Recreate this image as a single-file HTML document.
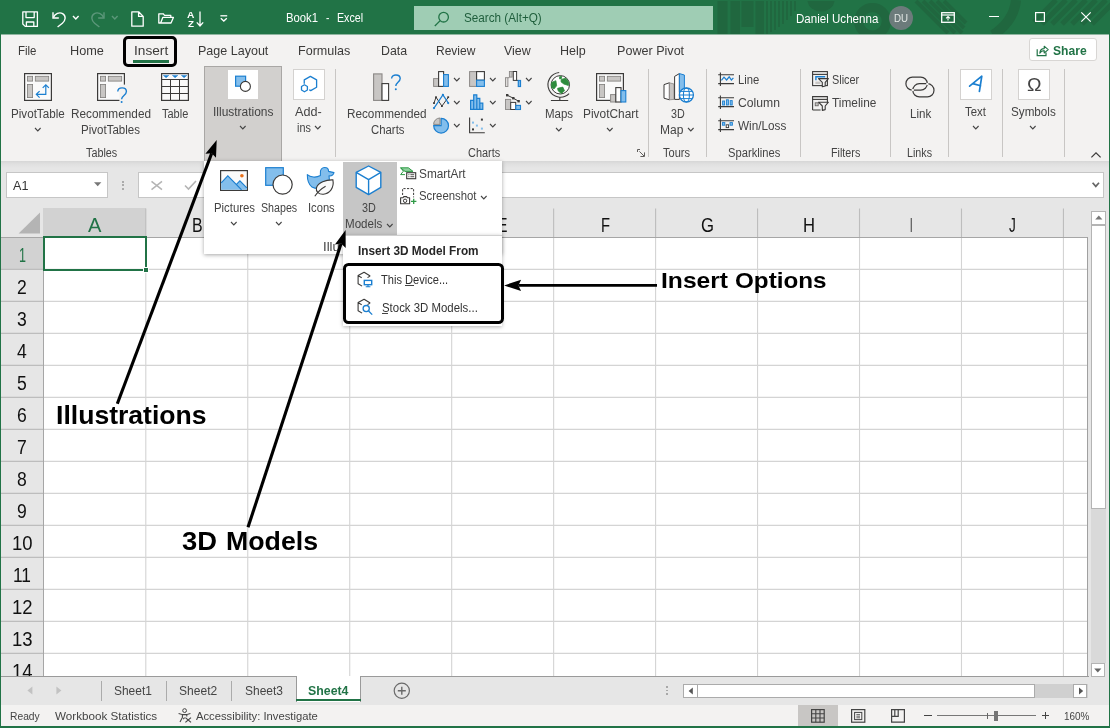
<!DOCTYPE html>
<html><head><meta charset="utf-8"><title>Excel</title>
<style>
html,body{margin:0;padding:0;}
body{width:1110px;height:728px;overflow:hidden;position:relative;background:#fff;font-family:"Liberation Sans",sans-serif;}
#w{position:absolute;left:0;top:0;width:1110px;height:728px;overflow:hidden;will-change:transform;}
#w div,#w span,#w svg{position:absolute;}
#w span{white-space:nowrap;transform-origin:0 0;}
#w svg{overflow:visible;}
</style></head><body><div id="w">
<div style="left:0px;top:0px;width:1110px;height:728px;background:#217346;"></div>
<div style="left:1px;top:34px;width:1107.5px;height:127px;background:#f3f2f1;"></div>
<div style="left:1px;top:161px;width:1107.5px;height:47px;background:#e6e6e6;background:linear-gradient(#d6d6d6 0,#e0e0e0 3px,#e6e6e6 7px);"></div>
<div style="left:1px;top:34px;width:1107.5px;height:1px;background:#8fb5a0;"></div>
<svg style="left:714px;top:0px;overflow:hidden;" width="396" height="34" viewBox="0 0 396 34">
<g fill="#20673f">
<rect x="3.5" y="1" width="10" height="33"/><rect x="16.5" y="1" width="9.5" height="33"/><rect x="27.5" y="1" width="12" height="26"/><rect x="41.5" y="1" width="8.5" height="33"/>
<rect x="52" y="1" width="2" height="33"/><rect x="56" y="1" width="2" height="31"/><rect x="60" y="1" width="2" height="29"/><rect x="64" y="1" width="2" height="26"/><rect x="68" y="1" width="2" height="23"/><rect x="72" y="1" width="2" height="19"/><rect x="76" y="1" width="2" height="15"/><rect x="80" y="1" width="2" height="10"/>
<path d="M93.5 1 A13.6 12 0 0 0 120.5 1 Z"/>
</g>
<g fill="none" stroke="#20673f">
<circle cx="158.5" cy="21.3" r="13.8" stroke-width="9.2"/>
<path d="M202 1 L234 33 M209 1 L241 33 M216 1 L248 33 M223 1 L250 28 M230 1 L252 23" stroke-width="4"/>
<path d="M302 0 Q300 21 279 35" stroke-width="10"/>
<path d="M320 22 L342 0 M328 24 L352 0 M338 24 L362 0 M348 24 L372 0 M358 24 L382 0 M368 24 L392 0 M378 24 L400 2" stroke-width="5"/>
</g></svg>
<svg style="left:22px;top:11px;" width="16" height="16" viewBox="0 0 16 16"><path d="M0.8 0.8 H15.4 V15.4 H3.2 L0.8 13 Z M4 0.8 V6.6 H12.2 V0.8 M4.4 15.4 V11 H11.8 V15.4" fill="none" stroke="#fff" stroke-width="1.3" stroke-linejoin="round"/></svg>
<svg style="left:51px;top:10px;" width="16" height="18" viewBox="0 0 16 18"><path d="M2 2.2 V8 H7.8" fill="none" stroke="#fff" stroke-width="1.4"/><path d="M2.4 7.6 C4 3.6 8.4 1.8 11.6 3.6 C15.4 6 14.6 10.6 11.4 13.2 L6.6 17" fill="none" stroke="#fff" stroke-width="1.4"/></svg>
<svg style="left:71.9px;top:14.5px;" width="7.6" height="5" viewBox="0 0 7.6 5"><path d="M1 1 L3.8 4 L6.6 1" fill="none" stroke="#fff" stroke-width="1.4"/></svg>
<svg style="left:90px;top:10px;" width="16" height="18" viewBox="0 0 16 18"><path d="M14 2.2 V8 H8.2" fill="none" stroke="#5c977a" stroke-width="1.4"/><path d="M13.6 7.6 C12 3.6 7.6 1.8 4.4 3.6 C0.6 6 1.4 10.6 4.6 13.2 L9.4 17" fill="none" stroke="#5c977a" stroke-width="1.4"/></svg>
<svg style="left:110.5px;top:14.5px;" width="7.6" height="5" viewBox="0 0 7.6 5"><path d="M1 1 L3.8 4 L6.6 1" fill="none" stroke="#5c977a" stroke-width="1.4"/></svg>
<svg style="left:130.5px;top:11px;" width="13" height="16" viewBox="0 0 13 16"><path d="M0.8 0.8 H7.6 L12.2 5.4 V15.2 H0.8 Z M7.6 0.8 V5.4 H12.2" fill="none" stroke="#fff" stroke-width="1.3" stroke-linejoin="round"/></svg>
<svg style="left:157.5px;top:13px;" width="16" height="11" viewBox="0 0 16 11"><path d="M2.6 10 H0.8 V0.8 H5.2 L6.6 2.4 H12.8 V4.4 M2.6 10 L4.8 4.4 H15.4 L13 10 Z" fill="none" stroke="#fff" stroke-width="1.3" stroke-linejoin="round"/></svg>
<span style="left:187.20px;top:9px;font-size:9.2px;line-height:12px;color:#fff;font-weight:bold;transform:scaleX(1.1170);">A</span>
<span style="left:187.80px;top:18px;font-size:9.2px;line-height:12px;color:#fff;font-weight:bold;transform:scaleX(1.0667);">Z</span>
<svg style="left:196px;top:11px;" width="8" height="16" viewBox="0 0 8 16"><path d="M4 0.5 V15 M0.8 11.4 L4 15 L7.2 11.4" fill="none" stroke="#fff" stroke-width="1.3"/></svg>
<svg style="left:220px;top:14.5px;" width="8" height="7" viewBox="0 0 8 7"><path d="M0.4 0.8 H7.2" stroke="#fff" stroke-width="1.3"/><path d="M0.8 3.2 L3.8 6 L6.8 3.2" fill="none" stroke="#fff" stroke-width="1.3"/></svg>
<span style="left:286.30px;top:10px;font-size:12px;line-height:16px;color:#fff;transform:scaleX(0.9412);">Book1</span>
<span style="left:325.80px;top:10px;font-size:12px;line-height:16px;color:#fff;transform:scaleX(0.8500);">-</span>
<span style="left:336.70px;top:10px;font-size:12px;line-height:16px;color:#fff;transform:scaleX(0.8885);">Excel</span>
<div style="left:414px;top:6px;width:299.3px;height:24px;background:#9fcdb4;"></div>
<svg style="left:433.5px;top:10.5px;" width="16" height="16" viewBox="0 0 16 16"><circle cx="9.6" cy="6.2" r="4.8" fill="none" stroke="#217346" stroke-width="1.3"/><path d="M6.2 9.6 L0.8 15" stroke="#217346" stroke-width="1.3"/></svg>
<span style="left:464.00px;top:10px;font-size:12px;line-height:16px;color:#1f5e3c;transform:scaleX(0.9751);">Search (Alt+Q)</span>
<span style="left:795.50px;top:11px;font-size:12px;line-height:16px;color:#fff;transform:scaleX(0.9640);">Daniel Uchenna</span>
<svg style="left:888px;top:5px;" width="26" height="26" viewBox="0 0 26 26"><circle cx="13" cy="13" r="12" fill="#6c7b7b"/></svg>
<span style="left:894.00px;top:12px;font-size:10.2px;line-height:13px;color:#e4e8e6;transform:scaleX(0.9532);">DU</span>
<svg style="left:940.5px;top:11.5px;" width="14" height="11" viewBox="0 0 14 11"><rect x="0.7" y="0.7" width="12.6" height="9.6" fill="none" stroke="#fff" stroke-width="1.3"/><path d="M0.7 3 H13.3" stroke="#fff" stroke-width="1.2"/><path d="M7 8.6 V4.6 M5 6.4 L7 4.6 L9 6.4" fill="none" stroke="#fff" stroke-width="1.1"/></svg>
<div style="left:989px;top:16px;width:10px;height:1.2px;background:#fff;"></div>
<svg style="left:1035px;top:12px;" width="10" height="10" viewBox="0 0 10 10"><rect x="0.6" y="0.6" width="8.8" height="8.8" fill="none" stroke="#fff" stroke-width="1.2"/></svg>
<svg style="left:1081px;top:12px;" width="10" height="10" viewBox="0 0 10 10"><path d="M0.3 0.3 L9.7 9.7 M9.7 0.3 L0.3 9.7" stroke="#fff" stroke-width="1.2"/></svg>
<span style="left:18.00px;top:43px;font-size:12.6px;line-height:16px;color:#3b3a39;transform:scaleX(0.9108);">File</span>
<span style="left:70.00px;top:43px;font-size:12.6px;line-height:16px;color:#3b3a39;transform:scaleX(1.0093);">Home</span>
<span style="left:133.60px;top:43px;font-size:12.6px;line-height:16px;color:#3b3a39;transform:scaleX(1.0867);">Insert</span>
<span style="left:197.50px;top:43px;font-size:12.6px;line-height:16px;color:#3b3a39;transform:scaleX(0.9947);">Page Layout</span>
<span style="left:298.30px;top:43px;font-size:12.6px;line-height:16px;color:#3b3a39;transform:scaleX(0.9976);">Formulas</span>
<span style="left:380.50px;top:43px;font-size:12.6px;line-height:16px;color:#3b3a39;transform:scaleX(0.9817);">Data</span>
<span style="left:436.30px;top:43px;font-size:12.6px;line-height:16px;color:#3b3a39;transform:scaleX(0.9532);">Review</span>
<span style="left:504.00px;top:43px;font-size:12.6px;line-height:16px;color:#3b3a39;transform:scaleX(0.9857);">View</span>
<span style="left:559.70px;top:43px;font-size:12.6px;line-height:16px;color:#3b3a39;transform:scaleX(0.9947);">Help</span>
<span style="left:616.70px;top:43px;font-size:12.6px;line-height:16px;color:#3b3a39;transform:scaleX(0.9989);">Power Pivot</span>
<div style="left:133px;top:60px;width:36px;height:3px;background:#217346;"></div>
<div style="left:123px;top:36px;width:54px;height:31px;background:transparent;box-sizing:border-box;border:3px solid #000;border-radius:5px;"></div>
<div style="left:1029px;top:38px;width:68px;height:23.4px;background:#fff;box-sizing:border-box;border:1px solid #d8d6d4;border-radius:3px;"></div>
<span style="left:1053.00px;top:43px;font-size:12.6px;line-height:16px;color:#217346;font-weight:bold;transform:scaleX(0.9611);">Share</span>
<svg style="left:1036px;top:44px;" width="13" height="13" viewBox="0 0 13 13"><path d="M1.2 5.2 V11.6 H10 V8.6" fill="none" stroke="#217346" stroke-width="1.2"/><path d="M3.8 9.2 C4 6 6 4.6 8.2 4.6 V2.2 L12.2 5.6 L8.2 9 V6.6 C6.4 6.6 4.8 7.4 3.8 9.2 Z" fill="none" stroke="#217346" stroke-width="1.1" stroke-linejoin="round"/></svg>
<svg style="left:24px;top:73px;" width="28" height="28" viewBox="0 0 28 28"><rect x="0.6" y="0.6" width="26.8" height="26.8" fill="#fafafa" stroke="#3b3a39" stroke-width="1.2"/><rect x="3.4" y="3.3" width="5.2" height="4.8" fill="#c8c6c4" stroke="#7f7d7b" stroke-width="0.8"/><rect x="11.3" y="3.3" width="13.4" height="4.8" fill="#c8c6c4" stroke="#7f7d7b" stroke-width="0.8"/><rect x="3.4" y="11.4" width="5.2" height="13.2" fill="#c8c6c4" stroke="#7f7d7b" stroke-width="0.8"/><path d="M12.3 21.3 H21.8 V11.8 M15.6 18.1 L12.3 21.3 L15.6 24.6 M18.7 14.9 L21.8 11.8 L24.9 14.9" fill="none" stroke="#1b7fd0" stroke-width="1.2"/></svg>
<span style="left:11.30px;top:106px;font-size:12px;line-height:16px;color:#444;transform:scaleX(0.9698);">PivotTable</span>
<svg style="left:33.7px;top:126.85px;" width="7.6" height="4.9" viewBox="0 0 7.6 4.9"><path d="M1 1 L3.8 3.9 L6.6 1" fill="none" stroke="#444" stroke-width="1.1"/></svg>
<svg style="left:97px;top:73px;" width="32" height="31" viewBox="0 0 32 31"><rect x="0.6" y="0.6" width="26.8" height="26.8" fill="#fafafa" stroke="#3b3a39" stroke-width="1.2"/><rect x="3.4" y="3.3" width="5.2" height="4.8" fill="#c8c6c4" stroke="#7f7d7b" stroke-width="0.8"/><rect x="11.3" y="3.3" width="13.4" height="4.8" fill="#c8c6c4" stroke="#7f7d7b" stroke-width="0.8"/><rect x="3.4" y="11.4" width="5.2" height="13.2" fill="#c8c6c4" stroke="#7f7d7b" stroke-width="0.8"/><rect x="22.4" y="11.6" width="10" height="20" fill="#f3f2f1"/><path d="M20.8 18.6 C20.8 13.6 29.4 13.6 29.4 18.6 C29.4 22.4 24.6 22.6 24.6 26.2" fill="none" stroke="#1b7fd0" stroke-width="1.4"/><circle cx="24.6" cy="29" r="1" fill="#1b7fd0"/></svg>
<span style="left:71.00px;top:106px;font-size:12px;line-height:16px;color:#444;transform:scaleX(0.9831);">Recommended</span>
<span style="left:81.00px;top:122px;font-size:12px;line-height:16px;color:#444;transform:scaleX(0.9613);">PivotTables</span>
<svg style="left:161px;top:73px;" width="28" height="28" viewBox="0 0 28 28"><rect x="0.6" y="0.6" width="26.8" height="26.8" fill="#fafafa" stroke="#3b3a39" stroke-width="1.2"/><path d="M0.6 6.5 H27.4 M0.6 13.5 H27.4 M0.6 20.5 H27.4 M9.5 6.5 V27.4 M18.5 6.5 V27.4" stroke="#3b3a39" stroke-width="1"/><path d="M2.4 2.4 H7.8 L5.1 4.7 Z M11.4 2.4 H16.8 L14.1 4.7 Z M20.4 2.4 H25.8 L23.1 4.7 Z" fill="#1b7fd0" stroke="#1b7fd0" stroke-width="0.5"/></svg>
<span style="left:161.70px;top:106px;font-size:12px;line-height:16px;color:#444;transform:scaleX(0.9168);">Table</span>
<span style="left:86.30px;top:145px;font-size:12px;line-height:16px;color:#444;transform:scaleX(0.8995);">Tables</span>
<div style="left:204px;top:66.3px;width:78px;height:95px;background:#d2d0ce;box-sizing:border-box;border:1px solid #a9a7a5;border-bottom:none;"></div>
<div style="left:227.5px;top:69.7px;width:30.5px;height:29.5px;background:#fff;"></div>
<svg style="left:234px;top:75px;" width="18" height="18" viewBox="0 0 18 18"><rect x="1.6" y="1.2" width="10" height="10" fill="#83beec" stroke="#1b7fd0" stroke-width="1.2"/><circle cx="11.4" cy="11.4" r="5" fill="#fff" stroke="#3b3a39" stroke-width="1.1"/></svg>
<span style="left:212.50px;top:104px;font-size:12px;line-height:16px;color:#444;transform:scaleX(0.9969);">Illustrations</span>
<svg style="left:238.5px;top:125.05px;" width="7.6" height="4.9" viewBox="0 0 7.6 4.9"><path d="M1 1 L3.8 3.9 L6.6 1" fill="none" stroke="#444" stroke-width="1.1"/></svg>
<div style="left:293px;top:69px;width:31.7px;height:30.7px;background:#fff;box-sizing:border-box;border:1px solid #d4d2d0;"></div>
<svg style="left:299px;top:74px;" width="20" height="20" viewBox="0 0 20 20"><path d="M5.25 9.8 V5.86 L11.4 2.4 L17.6 5.86 V13.3 L11.7 16.6 L10.2 15.8" fill="none" stroke="#1b7fd0" stroke-width="1.3" stroke-linejoin="round"/><path d="M5.45 10.8 L8.4 12.5 V16 L5.45 17.75 L2.5 16 V12.5 Z" fill="none" stroke="#1b7fd0" stroke-width="1.3" stroke-linejoin="round"/></svg>
<span style="left:295.00px;top:104px;font-size:12px;line-height:16px;color:#444;transform:scaleX(1.0522);">Add-</span>
<span style="left:296.70px;top:120px;font-size:12px;line-height:16px;color:#444;transform:scaleX(0.9012);">ins</span>
<svg style="left:313.9px;top:125.05px;" width="7.6" height="4.9" viewBox="0 0 7.6 4.9"><path d="M1 1 L3.8 3.9 L6.6 1" fill="none" stroke="#444" stroke-width="1.1"/></svg>
<div style="left:335px;top:69px;width:1px;height:88px;background:#c8c6c4;"></div>
<svg style="left:373px;top:73px;" width="30" height="29" viewBox="0 0 30 29"><rect x="0.6" y="0.9" width="8.4" height="26.5" fill="#c8c6c4" stroke="#8a8886" stroke-width="1.1"/><rect x="9" y="10.6" width="6.6" height="16.8" fill="#fff" stroke="#3b3a39" stroke-width="1.1"/><path d="M18.6 5.6 C18.6 0.8 27.2 0.8 27.2 5.6 C27.2 9.2 22.8 9.4 22.8 13" fill="none" stroke="#1b7fd0" stroke-width="1.4"/><circle cx="22.8" cy="16.2" r="1" fill="#1b7fd0"/></svg>
<span style="left:346.70px;top:106px;font-size:12px;line-height:16px;color:#444;transform:scaleX(0.9782);">Recommended</span>
<span style="left:370.50px;top:122px;font-size:12px;line-height:16px;color:#444;transform:scaleX(0.9470);">Charts</span>
<svg style="left:433px;top:71px;" width="16" height="16" viewBox="0 0 16 16"><rect x="0.6" y="7.6" width="5" height="7.8" fill="#c8c6c4" stroke="#8a8886" stroke-width="1"/><rect x="5.6" y="0.6" width="5" height="14.8" fill="#fff" stroke="#3b3a39" stroke-width="1.1"/><rect x="10.6" y="3.6" width="4.8" height="11.8" fill="#83beec" stroke="#1b7fd0" stroke-width="1.1"/></svg>
<svg style="left:452.7px;top:76.85px;" width="7.6" height="4.9" viewBox="0 0 7.6 4.9"><path d="M1 1 L3.8 3.9 L6.6 1" fill="none" stroke="#444" stroke-width="1.1"/></svg>
<svg style="left:469px;top:71px;" width="16" height="16" viewBox="0 0 16 16"><rect x="0.6" y="0.6" width="7" height="14.8" fill="#c8c6c4" stroke="#8a8886" stroke-width="1"/><rect x="7.6" y="0.6" width="7.8" height="8.6" fill="#fff" stroke="#3b3a39" stroke-width="1.1"/><rect x="7.6" y="9.2" width="7.8" height="6.2" fill="#83beec" stroke="#1b7fd0" stroke-width="1.1"/></svg>
<svg style="left:488.6px;top:76.85px;" width="7.6" height="4.9" viewBox="0 0 7.6 4.9"><path d="M1 1 L3.8 3.9 L6.6 1" fill="none" stroke="#444" stroke-width="1.1"/></svg>
<svg style="left:505px;top:71px;" width="16" height="16" viewBox="0 0 16 16"><rect x="0.5" y="6.7" width="2.4" height="8.8" fill="#e1dfdd" stroke="#8a8886" stroke-width="0.9"/><rect x="4.4" y="0.5" width="2.7" height="5.6" fill="#c8c6c4" stroke="#8a8886" stroke-width="0.9"/><path d="M2.9 6.7 H4.4 M7.1 0.5 H8.3" stroke="#8a8886" stroke-width="0.9"/><rect x="8.3" y="0.5" width="3.3" height="8.9" fill="#fff" stroke="#3b3a39" stroke-width="1"/><path d="M11.6 9.4 H13.2" stroke="#3b3a39" stroke-width="1"/><rect x="13.3" y="9.5" width="2.2" height="6" fill="#83beec" stroke="#1b7fd0" stroke-width="1.2"/></svg>
<svg style="left:524.7px;top:76.85px;" width="7.6" height="4.9" viewBox="0 0 7.6 4.9"><path d="M1 1 L3.8 3.9 L6.6 1" fill="none" stroke="#444" stroke-width="1.1"/></svg>
<svg style="left:433px;top:94px;" width="16" height="16" viewBox="0 0 16 16"><path d="M1 9.1 L3 3.2 L8.9 12.1 L15.4 3.2" fill="none" stroke="#3b3a39" stroke-width="1"/><path d="M1 14.1 L9.9 0.8 L15.4 9.1" fill="none" stroke="#1b7fd0" stroke-width="1.2"/><g fill="#3b3a39"><rect x="0.1" y="8.2" width="1.8" height="1.8"/><rect x="2.1" y="2.3" width="1.8" height="1.8"/><rect x="8" y="11.2" width="1.8" height="1.8"/><rect x="14.3" y="2.3" width="1.8" height="1.8"/></g><g fill="#1b7fd0"><circle cx="1" cy="14.1" r="1.1"/><circle cx="9.9" cy="0.9" r="1.1"/><circle cx="15.2" cy="9.1" r="1.1"/></g></svg>
<svg style="left:452.7px;top:99.85px;" width="7.6" height="4.9" viewBox="0 0 7.6 4.9"><path d="M1 1 L3.8 3.9 L6.6 1" fill="none" stroke="#444" stroke-width="1.1"/></svg>
<svg style="left:469px;top:94px;" width="16" height="16" viewBox="0 0 16 16"><path d="M1.6 15.4 V6.4 H4.7 V0.8 H7.8 V4.4 H10.8 V9.2 H13.8 V15.4 Z M4.7 6.4 V15.4 M7.8 4.4 V15.4 M10.8 9.2 V15.4" fill="#83beec" stroke="#1b7fd0" stroke-width="1.2"/></svg>
<svg style="left:488.6px;top:99.85px;" width="7.6" height="4.9" viewBox="0 0 7.6 4.9"><path d="M1 1 L3.8 3.9 L6.6 1" fill="none" stroke="#444" stroke-width="1.1"/></svg>
<svg style="left:505px;top:94px;" width="16" height="16" viewBox="0 0 16 16"><rect x="0.5" y="5.4" width="5.2" height="10.1" fill="#c8c6c4" stroke="#8a8886" stroke-width="0.9"/><rect x="5.7" y="8.4" width="5" height="7.1" fill="#fff" stroke="#3b3a39" stroke-width="1"/><rect x="10.8" y="11.4" width="4.7" height="4.1" fill="#83beec" stroke="#1b7fd0" stroke-width="1.1"/><path d="M2.2 1.2 L8.3 4.2 L13.6 7.2" fill="none" stroke="#3b3a39" stroke-width="1"/><rect x="1" y="0" width="2.4" height="2.4" fill="#3b3a39"/><rect x="7.1" y="3" width="2.4" height="2.4" fill="#3b3a39"/><rect x="12.4" y="6" width="2.4" height="2.4" fill="#3b3a39"/></svg>
<svg style="left:524.7px;top:99.85px;" width="7.6" height="4.9" viewBox="0 0 7.6 4.9"><path d="M1 1 L3.8 3.9 L6.6 1" fill="none" stroke="#444" stroke-width="1.1"/></svg>
<svg style="left:433px;top:116.5px;" width="17" height="17" viewBox="0 0 17 17"><path d="M8.1 8.7 V1.3 A7.4 7.4 0 1 1 0.7 8.7 Z" fill="#83beec" stroke="#1b7fd0" stroke-width="1.2"/><path d="M7 7.4 H0.6 A6.4 6.4 0 0 1 7 1 Z" fill="#c8c6c4" stroke="#8a8886" stroke-width="1"/></svg>
<svg style="left:452.7px;top:122.85px;" width="7.6" height="4.9" viewBox="0 0 7.6 4.9"><path d="M1 1 L3.8 3.9 L6.6 1" fill="none" stroke="#444" stroke-width="1.1"/></svg>
<svg style="left:469px;top:116.5px;" width="16" height="17" viewBox="0 0 16 17"><path d="M0.6 0.4 V15.7 H15.8" fill="none" stroke="#3b3a39" stroke-width="1.1"/><rect x="11.9" y="1.6" width="2" height="2" fill="#3b3a39"/><rect x="3" y="11.4" width="2" height="2" fill="#3b3a39"/><rect x="3" y="4.6" width="2" height="2" fill="#83beec"/><rect x="6.9" y="7.6" width="2" height="2" fill="#83beec"/><rect x="11.9" y="10.6" width="2" height="2" fill="#83beec"/></svg>
<svg style="left:488.6px;top:122.85px;" width="7.6" height="4.9" viewBox="0 0 7.6 4.9"><path d="M1 1 L3.8 3.9 L6.6 1" fill="none" stroke="#444" stroke-width="1.1"/></svg>
<svg style="left:546px;top:71px;" width="26" height="31" viewBox="0 0 26 31"><circle cx="14.3" cy="13.8" r="9.2" fill="#fff" stroke="#3b3a39" stroke-width="1"/><path d="M5.6 11.4 L9.9 9.7 L10.6 14.8 L7.9 18 L5.4 16.3 Z M15.1 8.4 L19.8 7.2 L22.9 11.4 L22.4 14.5 L17.8 13 L15.1 10.9 Z M11.6 17.3 L16.8 16.1 L18.5 19.8 L15.3 22.6 L12.1 19.8 Z M13.6 5.7 L15.5 5.2 L15.5 7.4 L13.6 7.9 Z" fill="#2e8b3d" stroke="#2e8b3d" stroke-width="0.8" stroke-linejoin="round"/><path d="M13.2 1.45 A12.4 12.4 0 1 0 23.1 22.6" fill="none" stroke="#3b3a39" stroke-width="1.1"/><path d="M13.8 26.2 V29.4 M4.9 29.5 H22.2" stroke="#3b3a39" stroke-width="1.1"/></svg>
<span style="left:544.70px;top:106px;font-size:12px;line-height:16px;color:#444;transform:scaleX(0.9566);">Maps</span>
<svg style="left:555px;top:126.85px;" width="7.6" height="4.9" viewBox="0 0 7.6 4.9"><path d="M1 1 L3.8 3.9 L6.6 1" fill="none" stroke="#444" stroke-width="1.1"/></svg>
<svg style="left:596px;top:73px;" width="31" height="30" viewBox="0 0 31 30"><rect x="0.6" y="0.6" width="26.8" height="26.8" fill="#fafafa" stroke="#3b3a39" stroke-width="1.2"/><rect x="3.4" y="3.3" width="5.2" height="4.8" fill="#c8c6c4" stroke="#7f7d7b" stroke-width="0.8"/><rect x="11.3" y="3.3" width="13.4" height="4.8" fill="#c8c6c4" stroke="#7f7d7b" stroke-width="0.8"/><rect x="3.4" y="11.4" width="5.2" height="13.2" fill="#c8c6c4" stroke="#7f7d7b" stroke-width="0.8"/><rect x="14.6" y="21.6" width="5.2" height="7.4" fill="#c8c6c4" stroke="#8a8886" stroke-width="1"/><rect x="19.8" y="14.6" width="5.2" height="14.4" fill="#fff" stroke="#3b3a39" stroke-width="1.1"/><rect x="25" y="17.6" width="4.8" height="11.4" fill="#83beec" stroke="#1b7fd0" stroke-width="1.1"/></svg>
<span style="left:582.50px;top:106px;font-size:12px;line-height:16px;color:#444;transform:scaleX(0.9911);">PivotChart</span>
<svg style="left:605.8px;top:126.85px;" width="7.6" height="4.9" viewBox="0 0 7.6 4.9"><path d="M1 1 L3.8 3.9 L6.6 1" fill="none" stroke="#444" stroke-width="1.1"/></svg>
<span style="left:467.50px;top:145px;font-size:12px;line-height:16px;color:#444;transform:scaleX(0.9102);">Charts</span>
<svg style="left:637px;top:149px;" width="8" height="8" viewBox="0 0 8 8"><path d="M0.5 3 V0.5 H3 M7.5 3.4 V7.5 H3.4 M2.4 2.4 L7 7" fill="none" stroke="#605e5c" stroke-width="1"/></svg>
<div style="left:648px;top:69px;width:1px;height:88px;background:#c8c6c4;"></div>
<svg style="left:663px;top:72px;" width="32" height="31" viewBox="0 0 32 31"><path d="M1 12.6 L6.4 10.8 V27.8 L1 26.2 Z" fill="#fff" stroke="#3b3a39" stroke-width="1"/><path d="M6.4 10.8 L11 12 V27.4 L6.4 27.8 Z" fill="#c8c6c4" stroke="#8a8886" stroke-width="0.8"/><path d="M11.6 4.4 L16.4 1.6 V27.4 L11.6 27.4 Z" fill="#fff" stroke="#3b3a39" stroke-width="1"/><path d="M16.4 1.6 L21.4 3 V17 L16.4 20 Z" fill="#83beec" stroke="#1b7fd0" stroke-width="1"/><circle cx="23.4" cy="23" r="7" fill="#fff" stroke="#1b7fd0" stroke-width="1.3"/><ellipse cx="23.4" cy="23" rx="3" ry="7" fill="none" stroke="#1b7fd0" stroke-width="1.1"/><path d="M16.6 23 H30.2 M17.6 19.4 H29.2 M17.6 26.6 H29.2" stroke="#1b7fd0" stroke-width="1"/></svg>
<span style="left:671.00px;top:106px;font-size:12px;line-height:16px;color:#444;transform:scaleX(0.8947);">3D</span>
<span style="left:660.30px;top:122px;font-size:12px;line-height:16px;color:#444;transform:scaleX(1.0011);">Map</span>
<svg style="left:687px;top:126.85px;" width="7.6" height="4.9" viewBox="0 0 7.6 4.9"><path d="M1 1 L3.8 3.9 L6.6 1" fill="none" stroke="#444" stroke-width="1.1"/></svg>
<span style="left:663.30px;top:145px;font-size:12px;line-height:16px;color:#444;transform:scaleX(0.9191);">Tours</span>
<div style="left:706px;top:69px;width:1px;height:88px;background:#c8c6c4;"></div>
<svg style="left:718px;top:72px;" width="16" height="14" viewBox="0 0 16 14"><path d="M2.4 0.4 V14 M0.2 2.8 H16 M0.2 11.6 H16" fill="none" stroke="#3b3a39" stroke-width="1.1"/><path d="M3.4 8.4 L6 5.2 L8.6 8 L11.2 4.8 L13.4 8 L15.4 5.8" fill="none" stroke="#1b7fd0" stroke-width="1.2"/></svg>
<svg style="left:718px;top:95px;" width="16" height="14" viewBox="0 0 16 14"><path d="M2.4 0.4 V14 M0.2 2.8 H16 M0.2 11.6 H16" fill="none" stroke="#3b3a39" stroke-width="1.1"/><rect x="4.6" y="6" width="2" height="4" fill="#83beec" stroke="#1b7fd0" stroke-width="0.9"/><rect x="8.4" y="4.8" width="2" height="5.2" fill="#83beec" stroke="#1b7fd0" stroke-width="0.9"/><rect x="12.2" y="5.6" width="2" height="4.4" fill="#83beec" stroke="#1b7fd0" stroke-width="0.9"/></svg>
<svg style="left:718px;top:118px;" width="16" height="14" viewBox="0 0 16 14"><path d="M2.4 0.4 V14 M0.2 2.8 H16 M0.2 11.6 H16" fill="none" stroke="#3b3a39" stroke-width="1.1"/><rect x="4.4" y="4.6" width="2.4" height="2.6" fill="#83beec" stroke="#1b7fd0" stroke-width="0.9"/><rect x="8.2" y="6.8" width="2.4" height="2.8" fill="#fff" stroke="#3b3a39" stroke-width="0.9"/><rect x="12" y="4.6" width="2.4" height="2.6" fill="#83beec" stroke="#1b7fd0" stroke-width="0.9"/></svg>
<span style="left:737.70px;top:72px;font-size:12px;line-height:16px;color:#444;transform:scaleX(0.9388);">Line</span>
<span style="left:737.70px;top:95px;font-size:12px;line-height:16px;color:#444;transform:scaleX(1.0151);">Column</span>
<span style="left:737.70px;top:118px;font-size:12px;line-height:16px;color:#444;transform:scaleX(0.9782);">Win/Loss</span>
<span style="left:727.50px;top:145px;font-size:12px;line-height:16px;color:#444;transform:scaleX(0.9321);">Sparklines</span>
<div style="left:800px;top:69px;width:1px;height:88px;background:#c8c6c4;"></div>
<svg style="left:811.7px;top:71px;" width="17" height="16" viewBox="0 0 17 16"><rect x="0.6" y="0.6" width="14.8" height="14" fill="none" stroke="#3b3a39" stroke-width="1.1"/><path d="M0.6 3.4 H15.4" stroke="#3b3a39" stroke-width="1.1"/><path d="M3.9 9.2 V5.8 H13.2" fill="none" stroke="#1b7fd0" stroke-width="1.4"/><rect x="3.4" y="10.6" width="5" height="2.4" fill="#c8c6c4"/><path d="M6.5 7.6 H16.4 L13.2 11.4 V15 L10.3 15.8 V11.4 Z" fill="#f3f2f1" stroke="#3b3a39" stroke-width="1.1" stroke-linejoin="round"/></svg>
<svg style="left:811.7px;top:95.5px;" width="17" height="16" viewBox="0 0 17 16"><path d="M0.6 14 V0.6 H15.4 V6.6 M0.6 14 H8.6" fill="none" stroke="#3b3a39" stroke-width="1.1"/><path d="M0.6 3.4 H15.4" stroke="#3b3a39" stroke-width="1.1"/><rect x="3.2" y="6.8" width="3" height="3" fill="#c8c6c4" stroke="#605e5c" stroke-width="0.8"/><g transform="translate(0,-1.4)"><path d="M6.5 7.6 H16.4 L13.2 11.4 V15 L10.3 15.8 V11.4 Z" fill="#f3f2f1" stroke="#3b3a39" stroke-width="1.1" stroke-linejoin="round"/></g></svg>
<span style="left:831.50px;top:72px;font-size:12px;line-height:16px;color:#444;transform:scaleX(0.9067);">Slicer</span>
<span style="left:831.70px;top:95px;font-size:12px;line-height:16px;color:#444;transform:scaleX(0.9872);">Timeline</span>
<span style="left:831.00px;top:145px;font-size:12px;line-height:16px;color:#444;transform:scaleX(0.8964);">Filters</span>
<div style="left:890px;top:69px;width:1px;height:88px;background:#c8c6c4;"></div>
<svg style="left:905px;top:76px;" width="30" height="22" viewBox="0 0 30 22"><rect x="0.9" y="1.1" width="21.4" height="13.1" rx="6.55" fill="none" stroke="#3b3a39" stroke-width="1.2"/><rect x="7.8" y="7.7" width="21.2" height="13.2" rx="6.6" fill="none" stroke="#3b3a39" stroke-width="1.2"/><path d="M7.8 13 V15 M22.3 7 V9" stroke="#f3f2f1" stroke-width="2.2"/></svg>
<span style="left:909.70px;top:106px;font-size:12px;line-height:16px;color:#444;transform:scaleX(0.9654);">Link</span>
<span style="left:906.70px;top:145px;font-size:12px;line-height:16px;color:#444;transform:scaleX(0.8929);">Links</span>
<div style="left:948px;top:69px;width:1px;height:88px;background:#c8c6c4;"></div>
<div style="left:960px;top:69px;width:32px;height:30.7px;background:#fff;box-sizing:border-box;border:1px solid #d4d2d0;"></div>
<svg style="left:968px;top:75px;" width="18" height="18" viewBox="0 0 18 18"><path d="M1.6 11.2 L13.8 1.2 L11.4 16.4 M4.8 8.6 L12.6 10.8" fill="none" stroke="#1b7fd0" stroke-width="1.7" stroke-linecap="round" stroke-linejoin="round"/></svg>
<span style="left:965.00px;top:104px;font-size:12px;line-height:16px;color:#444;transform:scaleX(0.9455);">Text</span>
<svg style="left:971.8px;top:125.05px;" width="7.6" height="4.9" viewBox="0 0 7.6 4.9"><path d="M1 1 L3.8 3.9 L6.6 1" fill="none" stroke="#444" stroke-width="1.1"/></svg>
<div style="left:1002px;top:69px;width:1px;height:88px;background:#c8c6c4;"></div>
<div style="left:1018px;top:69px;width:31.7px;height:30.7px;background:#fff;box-sizing:border-box;border:1px solid #d4d2d0;"></div>
<span style="left:1026.60px;top:73px;font-size:18.8px;line-height:23px;color:#444;transform:scaleX(1.0382);">Ω</span>
<span style="left:1011.00px;top:104px;font-size:12px;line-height:16px;color:#444;transform:scaleX(0.9739);">Symbols</span>
<svg style="left:1029.4px;top:125.05px;" width="7.6" height="4.9" viewBox="0 0 7.6 4.9"><path d="M1 1 L3.8 3.9 L6.6 1" fill="none" stroke="#444" stroke-width="1.1"/></svg>
<div style="left:1064px;top:69px;width:1px;height:88px;background:#c8c6c4;"></div>
<svg style="left:1090.5px;top:151.5px;" width="10" height="6" viewBox="0 0 10 6"><path d="M0.4 5.4 L5 0.8 L9.6 5.4" fill="none" stroke="#3b3a39" stroke-width="1.2"/></svg>
<div style="left:6px;top:172px;width:101.5px;height:25.5px;background:#fff;box-sizing:border-box;border:1px solid #c6c6c6;"></div>
<span style="left:13.30px;top:178px;font-size:12px;line-height:16px;color:#333;transform:scaleX(1.0485);">A1</span>
<svg style="left:94px;top:182px;" width="8" height="5" viewBox="0 0 8 5"><path d="M0 0.3 H7.4 L3.7 4.3 Z" fill="#777"/></svg>
<div style="left:122px;top:181px;width:2px;height:2px;background:#ababab;"></div>
<div style="left:122px;top:184px;width:2px;height:2px;background:#ababab;"></div>
<div style="left:122px;top:188px;width:2px;height:2px;background:#ababab;"></div>
<div style="left:138px;top:172px;width:966px;height:25.5px;background:#fff;box-sizing:border-box;border:1px solid #c6c6c6;"></div>
<svg style="left:151px;top:181px;" width="12" height="9" viewBox="0 0 12 9"><path d="M0.5 0.3 L11 8.7 M11 0.3 L0.5 8.7" stroke="#b4b4b4" stroke-width="1.5" fill="none"/></svg>
<svg style="left:184px;top:180px;" width="13" height="10" viewBox="0 0 13 10"><path d="M1 5.5 L4.5 9 L12 1" stroke="#b4b4b4" stroke-width="1.6" fill="none"/></svg>
<svg style="left:1091.5px;top:181.5px;" width="8" height="6" viewBox="0 0 8 6"><path d="M0.6 0.8 L3.8 4.4 L7 0.8" stroke="#666" stroke-width="1.7" fill="none"/></svg>
<div style="left:43px;top:237px;width:1045px;height:440px;background:#fff;"></div>
<div style="left:1px;top:208px;width:1107.5px;height:29px;background:#e6e6e6;"></div>
<div style="left:1px;top:237px;width:42px;height:440px;background:#e6e6e6;"></div>
<div style="left:43px;top:208px;width:103px;height:29px;background:#d2d2d2;"></div>
<div style="left:1px;top:237px;width:42.5px;height:32.5px;background:#d2d2d2;"></div>
<svg style="left:18px;top:212px;" width="23" height="22" viewBox="0 0 23 22"><path d="M22 0.5 V21.5 H0.6 Z" fill="#b4b4b4"/></svg>
<svg style="left:0px;top:0px;" width="1110" height="728" viewBox="0 0 1110 728"><path d="M145.80 237 V677 M247.76 237 V677 M349.72 237 V677 M451.68 237 V677 M553.64 237 V677 M655.60 237 V677 M757.56 237 V677 M859.52 237 V677 M961.48 237 V677 M1063.44 237 V677 M43 269.40 H1088 M43 301.40 H1088 M43 333.40 H1088 M43 365.40 H1088 M43 397.40 H1088 M43 429.40 H1088 M43 461.40 H1088 M43 493.40 H1088 M43 525.40 H1088 M43 557.40 H1088 M43 589.40 H1088 M43 621.40 H1088 M43 653.40 H1088 " stroke="#d4d4d4" stroke-width="1.1" fill="none"/><path d="M145.80 208.5 V237 M247.76 208.5 V237 M349.72 208.5 V237 M451.68 208.5 V237 M553.64 208.5 V237 M655.60 208.5 V237 M757.56 208.5 V237 M859.52 208.5 V237 M961.48 208.5 V237 M1063.44 208.5 V237 M1 269.40 H43 M1 301.40 H43 M1 333.40 H43 M1 365.40 H43 M1 397.40 H43 M1 429.40 H43 M1 461.40 H43 M1 493.40 H43 M1 525.40 H43 M1 557.40 H43 M1 589.40 H43 M1 621.40 H43 M1 653.40 H43 " stroke="#bdbdbd" stroke-width="1.1" fill="none"/></svg>
<div style="left:1px;top:236.5px;width:1087px;height:1px;background:#a6a6a6;"></div>
<div style="left:43px;top:237px;width:1px;height:440px;background:#a6a6a6;"></div>
<div style="left:1087px;top:237px;width:1px;height:440px;background:#a0a0a0;"></div>
<span style="left:88.30px;top:213px;font-size:20px;line-height:24px;color:#217346;transform:scaleX(1.0066);">A</span>
<span style="left:191.70px;top:213px;font-size:20px;line-height:24px;color:#111;transform:scaleX(0.7962);">B</span>
<span style="left:293.50px;top:213px;font-size:20px;line-height:24px;color:#111;transform:scaleX(0.7619);">C</span>
<span style="left:394.80px;top:213px;font-size:20px;line-height:24px;color:#111;transform:scaleX(0.8589);">D</span>
<span style="left:498.30px;top:213px;font-size:20px;line-height:24px;color:#111;transform:scaleX(0.7061);">E</span>
<span style="left:600.50px;top:213px;font-size:20px;line-height:24px;color:#111;transform:scaleX(0.7385);">F</span>
<span style="left:700.50px;top:213px;font-size:20px;line-height:24px;color:#111;transform:scaleX(0.8353);">G</span>
<span style="left:803.00px;top:213px;font-size:20px;line-height:24px;color:#111;transform:scaleX(0.8312);">H</span>
<span style="left:909.80px;top:213px;font-size:20px;line-height:24px;color:#111;transform:scaleX(0.4315);">I</span>
<span style="left:1009.10px;top:213px;font-size:20px;line-height:24px;color:#111;transform:scaleX(0.6800);">J</span>
<span style="left:18.70px;top:243px;font-size:19.6px;line-height:24px;color:#217346;transform:scaleX(0.6400);">1</span>
<span style="left:17.30px;top:275px;font-size:19.6px;line-height:24px;color:#111;transform:scaleX(0.8960);">2</span>
<span style="left:17.30px;top:307px;font-size:19.6px;line-height:24px;color:#111;transform:scaleX(0.8960);">3</span>
<span style="left:17.30px;top:339px;font-size:19.6px;line-height:24px;color:#111;transform:scaleX(0.8960);">4</span>
<span style="left:17.30px;top:371px;font-size:19.6px;line-height:24px;color:#111;transform:scaleX(0.8960);">5</span>
<span style="left:17.30px;top:403px;font-size:19.6px;line-height:24px;color:#111;transform:scaleX(0.8960);">6</span>
<span style="left:17.30px;top:435px;font-size:19.6px;line-height:24px;color:#111;transform:scaleX(0.8960);">7</span>
<span style="left:17.30px;top:467px;font-size:19.6px;line-height:24px;color:#111;transform:scaleX(0.8960);">8</span>
<span style="left:17.30px;top:499px;font-size:19.6px;line-height:24px;color:#111;transform:scaleX(0.8960);">9</span>
<span style="left:11.90px;top:531px;font-size:19.6px;line-height:24px;color:#111;transform:scaleX(0.9444);">10</span>
<span style="left:13.20px;top:563px;font-size:19.6px;line-height:24px;color:#111;transform:scaleX(0.8834);">11</span>
<span style="left:11.90px;top:595px;font-size:19.6px;line-height:24px;color:#111;transform:scaleX(0.9444);">12</span>
<span style="left:11.90px;top:627px;font-size:19.6px;line-height:24px;color:#111;transform:scaleX(0.9444);">13</span>
<span style="left:11.90px;top:659px;font-size:19.6px;line-height:24px;color:#111;transform:scaleX(0.9444);">14</span>
<div style="left:42.5px;top:236px;width:104.7px;height:34.5px;background:transparent;box-sizing:border-box;border:2px solid #217346;"></div>
<div style="left:142.5px;top:266.5px;width:6px;height:6px;background:#fff;"></div>
<div style="left:143.5px;top:267.5px;width:4.7px;height:4.7px;background:#217346;"></div>
<div style="left:1088px;top:208px;width:20.5px;height:469px;background:#e6e6e6;"></div>
<div style="left:1091px;top:225px;width:15px;height:438px;background:#d9d9d9;"></div>
<div style="left:1091px;top:210.5px;width:14.7px;height:14px;background:#fff;box-sizing:border-box;border:1px solid #b4b4b4;"></div>
<svg style="left:1094.5px;top:214.5px;" width="8" height="5" viewBox="0 0 8 5"><path d="M0.2 4.6 L3.8 0.6 L7.4 4.6 Z" fill="#777"/></svg>
<div style="left:1091px;top:224.5px;width:14.7px;height:284px;background:#fff;box-sizing:border-box;border:1px solid #b4b4b4;"></div>
<div style="left:1091px;top:663px;width:14.2px;height:14px;background:#fff;box-sizing:border-box;border:1px solid #b4b4b4;"></div>
<svg style="left:1094.3px;top:668px;" width="8" height="5" viewBox="0 0 8 5"><path d="M0.2 0.4 L3.8 4.4 L7.4 0.4 Z" fill="#666"/></svg>
<div style="left:1px;top:677px;width:1107.5px;height:28px;background:#e6e6e6;"></div>
<div style="left:1px;top:676px;width:1087.5px;height:1px;background:#9a9a9a;"></div>
<div style="left:1px;top:705px;width:1107.5px;height:21px;background:#f3f2f1;"></div>
<svg style="left:27px;top:686px;" width="6" height="9" viewBox="0 0 6 9"><path d="M5.4 0.4 V8.4 L0.4 4.4 Z" fill="#c2c2c2"/></svg>
<svg style="left:56px;top:686px;" width="6" height="9" viewBox="0 0 6 9"><path d="M0.4 0.4 V8.4 L5.4 4.4 Z" fill="#c2c2c2"/></svg>
<div style="left:101px;top:681px;width:1px;height:19.5px;background:#ababab;"></div>
<div style="left:166px;top:681px;width:1px;height:19.5px;background:#ababab;"></div>
<div style="left:231px;top:681px;width:1px;height:19.5px;background:#ababab;"></div>
<span style="left:113.80px;top:683px;font-size:12px;line-height:16px;color:#444;transform:scaleX(0.9957);">Sheet1</span>
<span style="left:178.80px;top:683px;font-size:12px;line-height:16px;color:#444;transform:scaleX(1.0036);">Sheet2</span>
<span style="left:244.50px;top:683px;font-size:12px;line-height:16px;color:#444;transform:scaleX(0.9984);">Sheet3</span>
<div style="left:296px;top:676px;width:65px;height:25.5px;background:#fff;box-sizing:border-box;border-left:1px solid #9a9a9a;border-right:1px solid #9a9a9a;"></div>
<div style="left:296px;top:699.3px;width:65px;height:2.2px;background:#217346;"></div>
<span style="left:308.20px;top:683px;font-size:12px;line-height:16px;color:#217346;font-weight:bold;transform:scaleX(1.0286);">Sheet4</span>
<svg style="left:393px;top:682px;" width="18" height="18" viewBox="0 0 18 18"><circle cx="8.8" cy="8.8" r="7.6" fill="none" stroke="#6a6a6a" stroke-width="1.2"/><path d="M8.8 4.8 V12.8 M4.8 8.8 H12.8" stroke="#6a6a6a" stroke-width="1.4"/></svg>
<div style="left:666px;top:686px;width:1.6px;height:1.6px;background:#a8a8a8;"></div>
<div style="left:666px;top:689.6px;width:1.6px;height:1.6px;background:#a8a8a8;"></div>
<div style="left:666px;top:693.2px;width:1.6px;height:1.6px;background:#a8a8a8;"></div>
<div style="left:683px;top:684px;width:405px;height:14.2px;background:#d0d0d0;"></div>
<div style="left:683px;top:684px;width:14.6px;height:14.2px;background:#fff;box-sizing:border-box;border:1px solid #ababab;"></div>
<svg style="left:688px;top:687px;" width="6" height="9" viewBox="0 0 6 9"><path d="M4.8 0.4 V7.6 L0.6 4 Z" fill="#555"/></svg>
<div style="left:697px;top:684px;width:337.5px;height:14.2px;background:#fff;box-sizing:border-box;border:1px solid #ababab;"></div>
<div style="left:1072.5px;top:684px;width:14.8px;height:14.2px;background:#fff;box-sizing:border-box;border:1px solid #ababab;"></div>
<svg style="left:1077.5px;top:687px;" width="6" height="9" viewBox="0 0 6 9"><path d="M1 0.4 V7.6 L5.2 4 Z" fill="#555"/></svg>
<span style="left:9.70px;top:709px;font-size:11.3px;line-height:14px;color:#444;transform:scaleX(0.9099);">Ready</span>
<span style="left:55.20px;top:709px;font-size:11.3px;line-height:14px;color:#444;transform:scaleX(1.0320);">Workbook Statistics</span>
<span style="left:196.30px;top:709px;font-size:11.3px;line-height:14px;color:#444;transform:scaleX(0.9949);">Accessibility: Investigate</span>
<svg style="left:177px;top:708px;" width="16" height="15" viewBox="0 0 16 15"><circle cx="7.6" cy="2.6" r="1.9" fill="none" stroke="#444" stroke-width="1"/><path d="M1.6 5.4 L5.4 6.6 V9.4 L3 14 M13.4 5.4 L9.8 6.6 V8.6 M5.4 6.6 H9.8 M7.6 9.6 L6.2 11.2" fill="none" stroke="#444" stroke-width="1.1"/><path d="M8.4 9.6 L14 14.4 M14 9.6 L8.4 14.4" stroke="#444" stroke-width="1.2"/></svg>
<div style="left:797.5px;top:705px;width:40px;height:21px;background:#c8c6c4;"></div>
<svg style="left:810.5px;top:708.5px;" width="14" height="14" viewBox="0 0 14 14"><rect x="0.6" y="0.6" width="12.6" height="12.6" fill="none" stroke="#444" stroke-width="1.2"/><path d="M0.6 4.8 H13.2 M0.6 9 H13.2 M4.8 0.6 V13.2 M9 0.6 V13.2" stroke="#444" stroke-width="1.1"/></svg>
<svg style="left:850.5px;top:708.5px;" width="15" height="14" viewBox="0 0 15 14"><rect x="0.6" y="0.6" width="13.2" height="12.6" fill="none" stroke="#444" stroke-width="1.2"/><rect x="3.6" y="3.4" width="7.2" height="7.2" fill="none" stroke="#444" stroke-width="1"/><path d="M5.4 5.6 H9 M5.4 7.2 H9 M5.4 8.8 H9" stroke="#444" stroke-width="0.8"/></svg>
<svg style="left:890.5px;top:708.5px;" width="15" height="14" viewBox="0 0 15 14"><path d="M0.6 0.6 H13.4 V13.2 H0.6 Z M0.6 7.4 H7.2 V0.6 M3.8 0.6 V7.4" fill="none" stroke="#444" stroke-width="1.2"/></svg>
<div style="left:924px;top:715px;width:7.5px;height:1.1px;background:#444;"></div>
<div style="left:937px;top:715px;width:99px;height:1px;background:#777;"></div>
<div style="left:986.5px;top:712.5px;width:1px;height:6px;background:#666;"></div>
<div style="left:993.6px;top:710.6px;width:4.8px;height:10.8px;background:#757575;"></div>
<div style="left:1041.5px;top:715px;width:7.8px;height:1.1px;background:#444;"></div>
<div style="left:1044.9px;top:711.6px;width:1.1px;height:7.8px;background:#444;"></div>
<span style="left:1063.50px;top:709px;font-size:11.3px;line-height:14px;color:#444;transform:scaleX(0.8812);">160%</span>
<div style="left:203.7px;top:160.8px;width:298.5px;height:93.4px;background:#fff;box-shadow:0 1px 4px rgba(0,0,0,0.35);"></div>
<svg style="left:220px;top:170px;" width="28" height="21" viewBox="0 0 28 21"><rect x="0.6" y="0.6" width="26.8" height="19.8" fill="#fafafa" stroke="#3b3a39" stroke-width="1.2"/><path d="M1.2 12.8 L7.8 5.8 L16.7 14.2 L19.9 10.8 L26.8 17.8 V19.8 H1.2 Z" fill="#83beec"/><path d="M1.2 12.8 L7.8 5.8 L21.6 19.8 M16.7 14.2 L19.9 10.8 L26.8 17.8" fill="none" stroke="#1b7fd0" stroke-width="1.1"/><circle cx="21.9" cy="5.8" r="1.8" fill="#e8701a"/></svg>
<span style="left:213.50px;top:200px;font-size:12px;line-height:16px;color:#444;transform:scaleX(0.9452);">Pictures</span>
<svg style="left:229.7px;top:221.05px;" width="7.6" height="4.9" viewBox="0 0 7.6 4.9"><path d="M1 1 L3.8 3.9 L6.6 1" fill="none" stroke="#444" stroke-width="1.1"/></svg>
<svg style="left:265px;top:167px;" width="28" height="28" viewBox="0 0 28 28"><rect x="0.7" y="0.7" width="17.6" height="17.6" fill="#83beec" stroke="#1b7fd0" stroke-width="1.2"/><circle cx="17.6" cy="17.6" r="9.6" fill="#fff" stroke="#3b3a39" stroke-width="1.2"/></svg>
<span style="left:260.50px;top:200px;font-size:12px;line-height:16px;color:#444;transform:scaleX(0.8897);">Shapes</span>
<svg style="left:274.7px;top:221.05px;" width="7.6" height="4.9" viewBox="0 0 7.6 4.9"><path d="M1 1 L3.8 3.9 L6.6 1" fill="none" stroke="#444" stroke-width="1.1"/></svg>
<svg style="left:307px;top:167px;" width="28" height="30" viewBox="0 0 28 30"><path d="M13.4 6 C13 2.6 15 0.5 17.6 0.5 C20 0.5 21.6 2.2 21.6 4.4 L27 5.6 C26.4 8 24.4 9 22 8.8 C22.6 12 22 16 20 18.4 C17 22 9 22.4 5 20 C1.6 17.6 0.3 12.6 0.3 7.6 C3.4 10.4 9 11 13.4 8.6 Z" fill="#83beec" stroke="#1b7fd0" stroke-width="1.1" stroke-linejoin="round"/><path d="M25.9 12.9 C19 12.6 11 15.6 9.4 21 C8.6 24.6 12 27.6 16.4 27.2 C22.6 26.6 27.4 21 25.9 12.9 Z" fill="#fafafa" stroke="#3b3a39" stroke-width="1.1"/><path d="M7.8 29.3 C10.6 25 14 21.8 18.6 19.2" fill="none" stroke="#3b3a39" stroke-width="1.1"/></svg>
<span style="left:308.00px;top:200px;font-size:12px;line-height:16px;color:#444;transform:scaleX(0.9307);">Icons</span>
<div style="left:342.5px;top:162px;width:54.5px;height:73px;background:#c6c6c6;"></div>
<svg style="left:355px;top:165px;" width="28" height="31" viewBox="0 0 28 31"><path d="M13.6 1 L25.8 7.4 V22.4 L13.6 29.6 L1.2 22.4 V7.4 Z" fill="#fff" stroke="#1b7fd0" stroke-width="1.4" stroke-linejoin="round"/><path d="M1.2 7.4 L13.6 14.6 L25.8 7.4 M13.6 14.6 V29.6" fill="none" stroke="#1b7fd0" stroke-width="1.4" stroke-linejoin="round"/></svg>
<span style="left:362.00px;top:200px;font-size:12px;line-height:16px;color:#444;transform:scaleX(0.9012);">3D</span>
<span style="left:345.20px;top:216px;font-size:12px;line-height:16px;color:#444;transform:scaleX(0.9641);">Models</span>
<svg style="left:386px;top:222.85px;" width="7.6" height="4.9" viewBox="0 0 7.6 4.9"><path d="M1 1 L3.8 3.9 L6.6 1" fill="none" stroke="#444" stroke-width="1.1"/></svg>
<svg style="left:400px;top:167px;" width="17" height="13" viewBox="0 0 17 13"><path d="M0.6 0.8 H8.4 L13 4.4 H5 Z" fill="#8fd19e" stroke="#2e9a46" stroke-width="1"/><path d="M0.6 0.8 L3.4 4.2 L0.6 7.6 H5" fill="none" stroke="#2e9a46" stroke-width="1"/><rect x="6.7" y="5.7" width="9" height="6" fill="#fff" stroke="#3b3a39" stroke-width="1.1"/><path d="M8.4 7.7 H9.4 M10.4 7.7 H14.2 M8.4 9.7 H9.4 M10.4 9.7 H14.2" stroke="#3b3a39" stroke-width="0.9"/></svg>
<span style="left:419.20px;top:166px;font-size:12px;line-height:16px;color:#444;transform:scaleX(0.9849);">SmartArt</span>
<svg style="left:400px;top:188px;" width="17" height="17" viewBox="0 0 17 17"><path d="M2.6 7 V0.6 H13.6 V9.4" fill="none" stroke="#3b3a39" stroke-width="1" stroke-dasharray="2.2 1.4"/><path d="M0.6 9.8 H3 L3.8 8.6 H6.6 L7.4 9.8 H9.6 V15.8 H0.6 Z" fill="#fff" stroke="#3b3a39" stroke-width="1.1" stroke-linejoin="round"/><circle cx="5.1" cy="12.8" r="1.7" fill="none" stroke="#3b3a39" stroke-width="1"/><path d="M11 13.4 H16.4 M13.7 10.8 V16" stroke="#2e9a46" stroke-width="1.3"/></svg>
<span style="left:419.20px;top:188px;font-size:12px;line-height:16px;color:#444;transform:scaleX(0.9475);">Screenshot</span>
<svg style="left:480px;top:195.35px;" width="7.6" height="4.9" viewBox="0 0 7.6 4.9"><path d="M1 1 L3.8 3.9 L6.6 1" fill="none" stroke="#444" stroke-width="1.1"/></svg>
<span style="left:322.70px;top:239px;font-size:12px;line-height:16px;color:#444;transform:scaleX(1.0971);">Illu</span>
<div style="left:342.5px;top:235px;width:159.7px;height:91px;background:#fff;box-shadow:0 1px 4px rgba(0,0,0,0.3);"></div>
<div style="left:343px;top:235px;width:159px;height:0.8px;background:#d0d0d0;"></div>
<span style="left:357.70px;top:243px;font-size:12px;line-height:16px;color:#262626;font-weight:bold;transform:scaleX(0.9830);">Insert 3D Model From</span>
<div style="left:343px;top:263px;width:161px;height:61px;background:#fff;box-sizing:border-box;border:3px solid #000;border-radius:5.5px;"></div>
<svg style="left:356.5px;top:271.5px;" width="17" height="16" viewBox="0 0 17 16"><path d="M5.1 14.1 L1.1 11.7 V3.6 L7.1 0.3 L13.2 4 M1.1 3.6 L4.7 5.8 M13.2 4 L10.5 5.6" fill="none" stroke="#3b3a39" stroke-width="1.1" stroke-linejoin="round"/><rect x="7.3" y="8.4" width="7.4" height="4.3" fill="#fff" stroke="#1b7fd0" stroke-width="1.4"/><path d="M11 13 V14.6 M8.7 14.8 H13.4" stroke="#1b7fd0" stroke-width="1.1"/></svg>
<span style="left:381.30px;top:272px;font-size:12px;line-height:16px;color:#333;transform:scaleX(0.9245);">This Device...</span>
<div style="left:405px;top:285.4px;width:9.2px;height:1px;background:#444;"></div>
<svg style="left:356.5px;top:299px;" width="17" height="17" viewBox="0 0 17 17"><path d="M5.1 14.1 L1.1 11.7 V3.6 L7.1 0.3 L13.2 4 M1.1 3.6 L4.7 5.8 M13.2 4 L10.5 5.6" fill="none" stroke="#3b3a39" stroke-width="1.1" stroke-linejoin="round"/><circle cx="9.2" cy="9.6" r="3.1" fill="#fff" stroke="#1b7fd0" stroke-width="1.3"/><path d="M11.6 12 L15.2 15.6" stroke="#1b7fd0" stroke-width="1.3"/></svg>
<span style="left:381.50px;top:300px;font-size:12px;line-height:16px;color:#333;transform:scaleX(0.9515);">Stock 3D Models...</span>
<div style="left:381.8px;top:313.4px;width:6.6px;height:1px;background:#444;"></div>
<svg style="left:0px;top:0px;" width="1110" height="728" viewBox="0 0 1110 728"><line x1="117.3" y1="403.8" x2="211.7" y2="153.3" stroke="#000" stroke-width="3.1"/><path d="M216.7 139.9 L216.0 157.8 L211.7 153.3 L205.4 153.8 Z" fill="#000"/><line x1="248.0" y1="527.3" x2="341.1" y2="243.6" stroke="#000" stroke-width="3.1"/><path d="M345.6 230.0 L345.7 247.9 L341.1 243.6 L334.9 244.4 Z" fill="#000"/><line x1="657.0" y1="285.4" x2="518.4" y2="285.4" stroke="#000" stroke-width="2.9"/><path d="M504.1 285.4 L521.1 279.7 L518.4 285.4 L521.1 291.1 Z" fill="#000"/></svg>
<span style="left:660.90px;top:267px;font-size:22px;line-height:27px;color:#000;font-weight:bold;transform:scaleX(1.1195);">Insert</span>
<span style="left:734.70px;top:267px;font-size:22px;line-height:27px;color:#000;font-weight:bold;transform:scaleX(1.1020);">Options</span>
<span style="left:55.90px;top:400px;font-size:25.6px;line-height:30px;color:#000;font-weight:bold;transform:scaleX(1.0382);">Illustrations</span>
<span style="left:182.00px;top:526px;font-size:25.2px;line-height:30px;color:#000;font-weight:bold;transform:scaleX(1.0874);">3D</span>
<span style="left:225.90px;top:526px;font-size:25.2px;line-height:30px;color:#000;font-weight:bold;transform:scaleX(1.0617);">Models</span>
</div></body></html>
